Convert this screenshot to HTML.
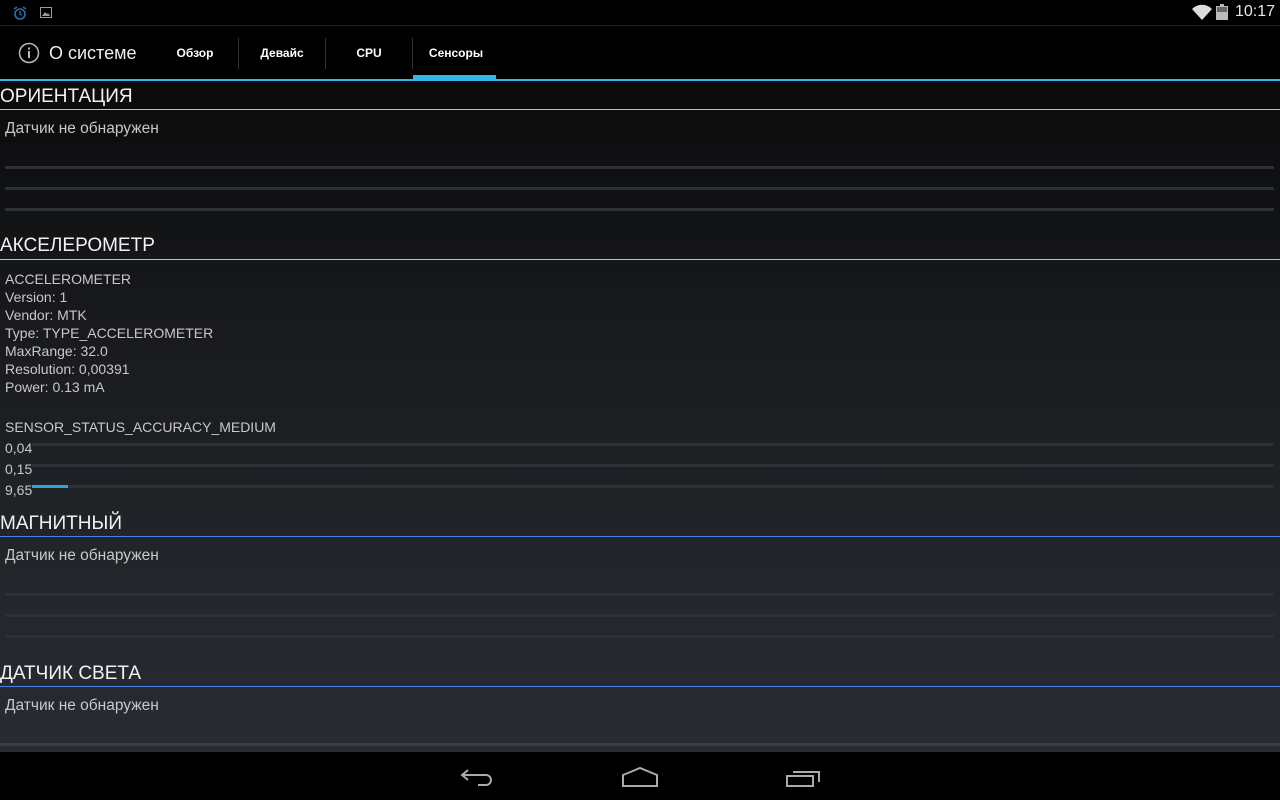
<!DOCTYPE html>
<html><head><meta charset="utf-8"><style>
*{margin:0;padding:0;box-sizing:border-box}
body{width:1280px;height:800px;overflow:hidden;background:#000;font-family:"Liberation Sans","DejaVu Sans",sans-serif;position:relative}
.a{position:absolute}
#content{position:absolute;left:0;top:81px;width:1280px;height:671px;background:linear-gradient(#0b0b0c,#191b1e 40%,#23262b 75%,#282b32)}
.h{position:absolute;left:0;font-size:19px;color:#f2f2f2;line-height:24px}
.ul{position:absolute;left:0;width:1280px;height:1px}
.t{position:absolute;left:5px;font-size:14px;color:#c8c8c8;line-height:18px}
.n{font-size:15.5px}
.bar{position:absolute;left:5px;right:6px;height:3px;background:#2d3034;border-radius:1px}
.tab{position:absolute;top:46px;font-size:12px;font-weight:bold;color:#fff;text-align:center}
.sep{position:absolute;top:38px;width:1px;height:31px;background:#333}
</style></head><body>
<svg class="a" style="left:12px;top:5px" width="16" height="16" viewBox="0 0 16 16"><circle cx="8" cy="9" r="5" fill="none" stroke="#2b6fb3" stroke-width="1.6"/><path d="M8 6v3l2 1M2 4l3-2M14 4l-3-2" stroke="#2b6fb3" stroke-width="1.4" fill="none"/></svg>
<svg class="a" style="left:40px;top:7px" width="12" height="11" viewBox="0 0 12 11"><rect x="0.5" y="0.5" width="11" height="10" fill="none" stroke="#999"/><path d="M2 9l3-4 2 2 1-1 2 3z" fill="#999"/></svg>
<svg class="a" style="left:1192px;top:4px" width="20" height="16" viewBox="0 0 20 16"><path d="M0 5a14 14 0 0 1 20 0L10 16z" fill="#ddd"/></svg>
<svg class="a" style="left:1216px;top:4px" width="12" height="16" viewBox="0 0 12 16"><rect x="4" y="0" width="4" height="2" fill="#bbb"/><rect x="0" y="2" width="12" height="14" fill="#bbb"/><rect x="1" y="3" width="10" height="5" fill="#666"/></svg>
<div class="a" style="left:1235px;top:3px;font-size:16px;color:#e6e6e6">10:17</div>
<div class="a" style="left:0;top:25px;width:1280px;height:1px;background:#222"></div>
<svg class="a" style="left:18px;top:42px" width="22" height="22" viewBox="0 0 22 22"><circle cx="11" cy="11" r="9.5" fill="none" stroke="#bbb" stroke-width="1.5"/><rect x="10" y="9" width="2" height="7" fill="#bbb"/><rect x="10" y="5.5" width="2" height="2" fill="#bbb"/></svg>
<div class="a" style="left:49px;top:43px;font-size:18px;color:#eee">О системе</div>
<div class="tab" style="left:152px;width:86px">Обзор</div>
<div class="sep" style="left:238px"></div>
<div class="tab" style="left:239px;width:86px">Девайс</div>
<div class="sep" style="left:325px"></div>
<div class="tab" style="left:326px;width:86px">CPU</div>
<div class="sep" style="left:412px"></div>
<div class="tab" style="left:413px;width:86px">Сенсоры</div>
<div class="a" style="left:413px;top:75px;width:83px;height:4px;background:#33b5e5"></div>
<div class="a" style="left:0;top:79px;width:1280px;height:2px;background:#33b5e5"></div>
<div id="content"></div>
<div class="h" style="top:85px">ОРИЕНТАЦИЯ</div>
<div class="ul" style="top:109px;background:#a9c6e6"></div>
<div class="t n" style="top:120px">Датчик не обнаружен</div>
<div class="bar" style="top:166px"></div><div class="bar" style="top:187px"></div><div class="bar" style="top:208px"></div>
<div class="h" style="top:234px">АКСЕЛЕРОМЕТР</div>
<div class="ul" style="top:259px;background:#bbbfc5"></div>
<div class="t" style="top:270px">ACCELEROMETER<br>Version: 1<br>Vendor: MTK<br>Type: TYPE_ACCELEROMETER<br>MaxRange: 32.0<br>Resolution: 0,00391<br>Power: 0.13 mA</div>
<div class="t" style="top:418px">SENSOR_STATUS_ACCURACY_MEDIUM</div>
<div class="bar" style="top:443px;left:32px"></div><div class="t" style="top:439px">0,04</div>
<div class="bar" style="top:464px;left:32px"></div><div class="t" style="top:460px">0,15</div>
<div class="bar" style="top:485px;left:32px"></div><div class="a" style="left:32px;top:485px;width:36px;height:3px;background:#33a5d5"></div><div class="t" style="top:481px">9,65</div>
<div class="h" style="top:512px">МАГНИТНЫЙ</div>
<div class="ul" style="top:536px;background:#4a83e8"></div>
<div class="t n" style="top:547px">Датчик не обнаружен</div>
<div class="bar" style="top:593px"></div><div class="bar" style="top:614px"></div><div class="bar" style="top:635px"></div>
<div class="h" style="top:662px">ДАТЧИК СВЕТА</div>
<div class="ul" style="top:686px;background:#4a83e8"></div>
<div class="t n" style="top:697px">Датчик не обнаружен</div>
<div class="bar" style="top:743px;left:0;right:0;background:#3a3d42"></div>
<div class="a" style="left:0;top:752px;width:1280px;height:48px;background:#000"></div>
<svg class="a" style="left:460px;top:766px" width="36" height="22" viewBox="0 0 36 22"><path d="M8 4L2 9l6 5M2 9h24a5 5 0 0 1 0 10h-8" fill="none" stroke="#aaa" stroke-width="2"/></svg>
<svg class="a" style="left:621px;top:766px" width="38" height="22" viewBox="0 0 38 22"><path d="M2 20V9L19 2l17 7v11z" fill="none" stroke="#aaa" stroke-width="2"/></svg>
<svg class="a" style="left:785px;top:768px" width="36" height="20" viewBox="0 0 36 20"><path d="M2 8h26v10H2zM8 4h26v10" fill="none" stroke="#aaa" stroke-width="2"/></svg>
</body></html>
